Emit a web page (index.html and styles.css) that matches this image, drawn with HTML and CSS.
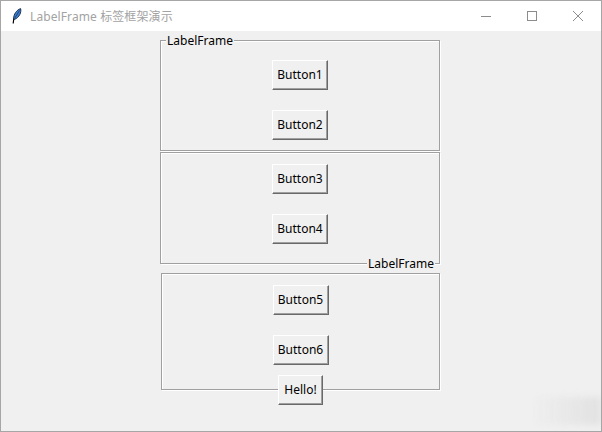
FILE: index.html
```html
<!DOCTYPE html>
<html lang="zh">
<head>
    <meta charset="UTF-8">
    <title>LabelFrame 标签框架演示</title>
    <link rel="stylesheet" href="styles.css">
</head>
<body>
    <div class="window">
        <div class="titlebar">
            <svg class="feather" width="10" height="16" viewBox="0 0 10 16">
                <path d="M2 10 L1.6 12 L1.2 15.5" fill="none" stroke="#000" stroke-width="1.2"/>
                <path d="M8.6 0.6 C9.6 4 7.5 9.5 2.4 11.5 L1.6 10.6 C1.6 6.5 4.5 2 8.6 0.6 Z" fill="#3f7fd0" stroke="#10243f" stroke-width="0.9"/>
                <path d="M7.5 2.5 L2.5 10.5" fill="none" stroke="#0d2a52" stroke-width="0.7"/>
            </svg>
            <span class="title">LabelFrame 标签框架演示</span>
            <div class="controls">
                <svg width="12" height="12" viewBox="0 0 12 12"><path d="M1 6.5 H11" stroke="#8c8c8c" fill="none"/></svg>
                <svg width="12" height="12" viewBox="0 0 12 12"><rect x="1.5" y="1.5" width="9" height="9" stroke="#8c8c8c" fill="none"/></svg>
                <svg width="12" height="12" viewBox="0 0 12 12"><path d="M1 1 L11 11 M11 1 L1 11" stroke="#8c8c8c" fill="none"/></svg>
            </div>
        </div>
        <div class="content">
            <div class="frame frame-top">
                <span class="frame-label label-nw">LabelFrame</span>
                <button>Button1</button>
                <button>Button2</button>
            </div>
            <div class="frame frame-middle">
                <button>Button3</button>
                <button>Button4</button>
                <span class="frame-label label-se">LabelFrame</span>
            </div>
            <div class="frame frame-bottom">
                <button>Button5</button>
                <button>Button6</button>
                <button class="hello">Hello!</button>
            </div>
            <div class="smudge"></div>
        </div>
    </div>
</body>
</html>
```

FILE: styles.css
```css
body {
    margin: 0;
    font-family: "Noto Sans", "Noto Sans CJK SC", sans-serif;
    font-size: 12px;
    color: #000;
}

.window {
    box-sizing: border-box;
    width: 602px;
    height: 432px;
    border: 1px solid #a6a6a6;
    display: flex;
    flex-direction: column;
    overflow: hidden;
}

.titlebar {
    height: 30px;
    flex-shrink: 0;
    background-color: #fff;
    display: flex;
    align-items: center;
    padding-left: 11px;
}

.feather {
    margin-right: 8px;
}

.title {
    color: #a3a3a3;
    font-size: 12px;
    letter-spacing: 0.1px;
}

.controls {
    margin-left: auto;
    display: flex;
    gap: 34px;
    padding-right: 17px;
}

.content {
    flex: 1;
    position: relative;
    background-color: #f0f0f0;
    padding-top: 9px;
    padding-left: 159px;
}

.frame {
    position: relative;
    box-sizing: border-box;
    width: 280px;
    border: 1px solid #a0a0a0;
    box-shadow: inset 1px 1px 0 #fff, 1px 1px 0 #fff;
    display: flex;
    flex-direction: column;
    align-items: center;
    gap: 20px;
}

.frame-top {
    height: 111px;
    padding-top: 19px;
}

.frame-middle {
    height: 112px;
    margin-top: 1px;
    padding-top: 11px;
}

.frame-bottom {
    width: 279px;
    height: 117px;
    margin-top: 9px;
    margin-left: 1px;
    padding-top: 11px;
}

.frame-label {
    position: absolute;
    background-color: #f0f0f0;
    padding: 0 1px;
    line-height: 14px;
}

.label-nw {
    top: -7px;
    left: 5px;
}

.label-se {
    bottom: -8px;
    right: 4px;
}

button {
    box-sizing: border-box;
    flex-shrink: 0;
    width: 56px;
    height: 30px;
    padding: 0 0 2px;
    font: inherit;
    color: #000;
    background-color: #f0f0f0;
    border: 1px solid;
    border-color: #fff #696969 #696969 #fff;
    box-shadow: inset -1px -1px 0 #a0a0a0;
}

.hello {
    width: 45px;
    margin-top: -10px;
}

.smudge {
    position: absolute;
    right: 0;
    bottom: 6px;
    width: 70px;
    height: 28px;
    background: linear-gradient(to right, rgba(222, 222, 222, 0), rgba(222, 222, 222, 0.8));
    filter: blur(3px);
}
```
